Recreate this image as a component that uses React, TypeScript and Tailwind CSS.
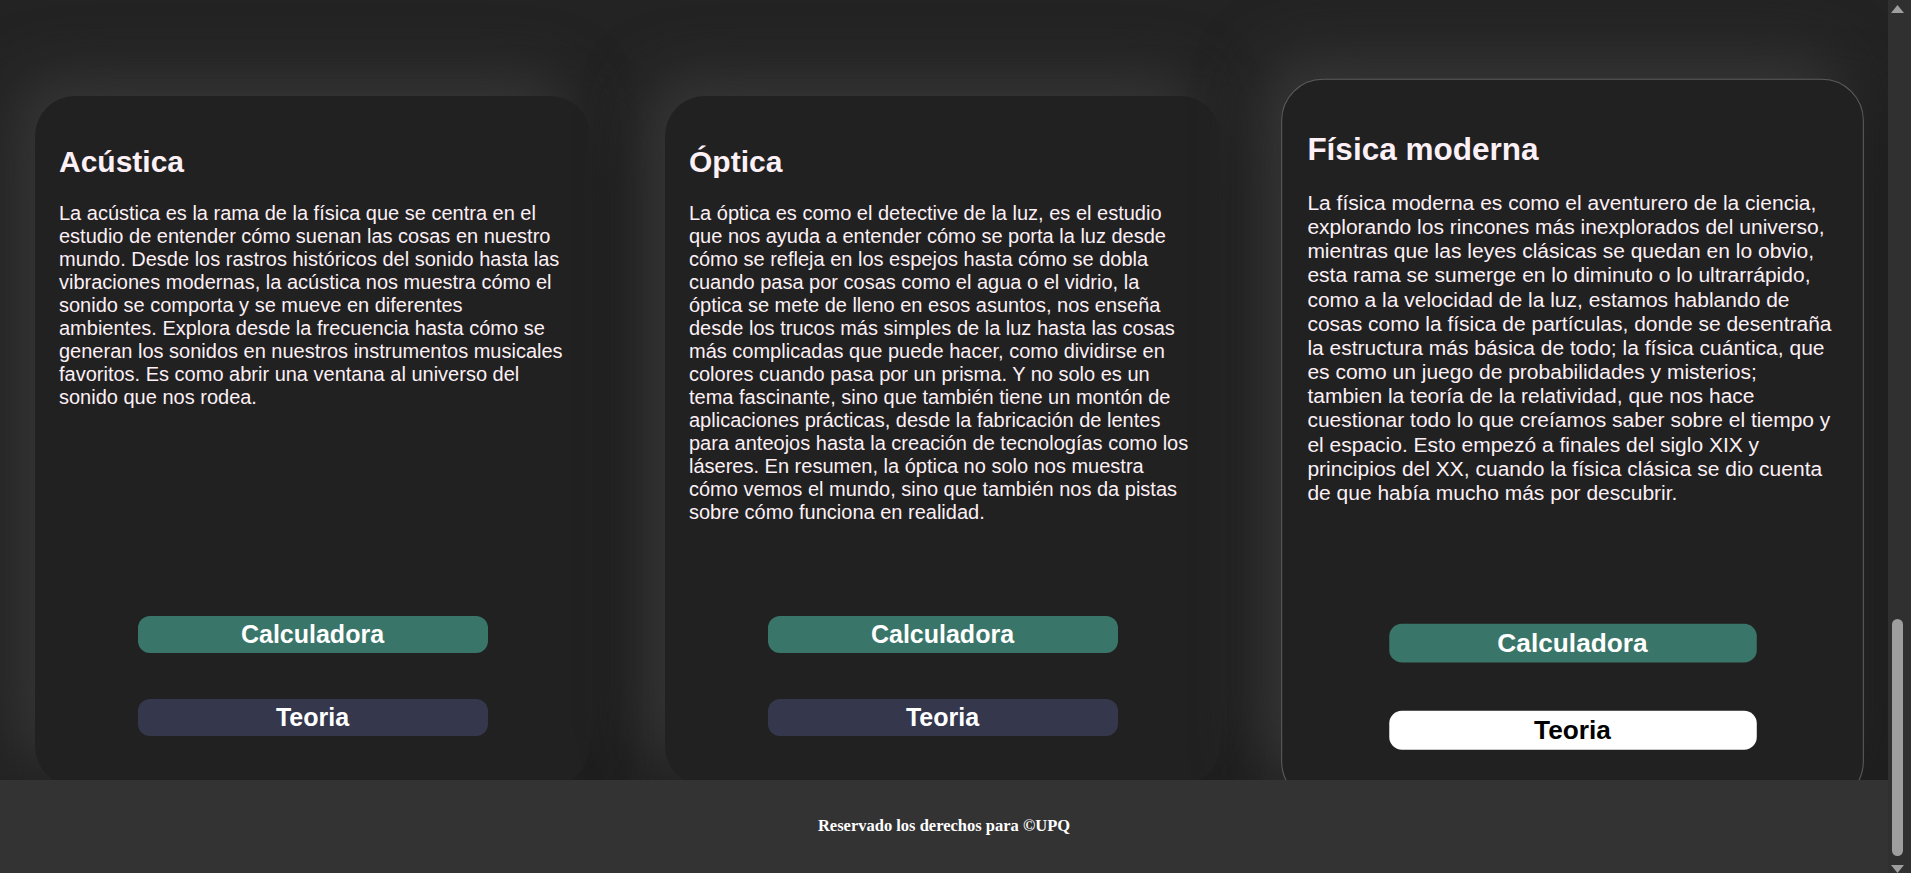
import React from 'react';

type Rama = {
  titulo: string;
  texto: string;
  activa?: boolean;
};

const ramas: Rama[] = [
  {
    titulo: 'Acústica',
    texto:
      'La acústica es la rama de la física que se centra en el estudio de entender cómo suenan las cosas en nuestro mundo. Desde los rastros históricos del sonido hasta las vibraciones modernas, la acústica nos muestra cómo el sonido se comporta y se mueve en diferentes ambientes. Explora desde la frecuencia hasta cómo se generan los sonidos en nuestros instrumentos musicales favoritos. Es como abrir una ventana al universo del sonido que nos rodea.',
  },
  {
    titulo: 'Óptica',
    texto:
      'La óptica es como el detective de la luz, es el estudio que nos ayuda a entender cómo se porta la luz desde cómo se refleja en los espejos hasta cómo se dobla cuando pasa por cosas como el agua o el vidrio, la óptica se mete de lleno en esos asuntos, nos enseña desde los trucos más simples de la luz hasta las cosas más complicadas que puede hacer, como dividirse en colores cuando pasa por un prisma. Y no solo es un tema fascinante, sino que también tiene un montón de aplicaciones prácticas, desde la fabricación de lentes para anteojos hasta la creación de tecnologías como los láseres. En resumen, la óptica no solo nos muestra cómo vemos el mundo, sino que también nos da pistas sobre cómo funciona en realidad.',
  },
  {
    titulo: 'Física moderna',
    texto:
      'La física moderna es como el aventurero de la ciencia, explorando los rincones más inexplorados del universo, mientras que las leyes clásicas se quedan en lo obvio, esta rama se sumerge en lo diminuto o lo ultrarrápido, como a la velocidad de la luz, estamos hablando de cosas como la física de partículas, donde se desentraña la estructura más básica de todo; la física cuántica, que es como un juego de probabilidades y misterios; tambien la teoría de la relatividad, que nos hace cuestionar todo lo que creíamos saber sobre el tiempo y el espacio. Esto empezó a finales del siglo XIX y principios del XX, cuando la física clásica se dio cuenta de que había mucho más por descubrir.',
    activa: true,
  },
];

function Tarjeta({ titulo, texto, activa }: Rama) {
  return (
    <div
      className={
        activa
          ? 'flex h-[690px] w-[555px] shrink-0 scale-105 flex-col rounded-[40px] border border-[#5c5c5c] bg-[#212121] pt-6 pr-[27px] pb-6 pl-6 shadow-[-20px_-20px_60px_#373737,20px_20px_60px_#1a1a1a]'
          : 'flex h-[690px] w-[555px] shrink-0 flex-col rounded-[40px] bg-[#212121] pt-6 pr-[27px] pb-6 pl-6 shadow-[-20px_-20px_60px_#373737,20px_20px_60px_#1a1a1a]'
      }
    >
      <h2 className="mt-[25px] mb-[23px] text-[30px] leading-[normal] font-bold text-[#fdf0f6]">
        {titulo}
      </h2>
      <p className="text-[20px] leading-[normal] text-[#fdf0f6]">{texto}</p>
      <div className="mt-auto flex flex-col items-center gap-[46px] pb-[26px] pl-[3px]">
        <button
          type="button"
          className="h-[37px] w-[350px] rounded-xl bg-[#3a7569] text-[25px] leading-none font-bold text-white"
        >
          Calculadora
        </button>
        <button
          type="button"
          className={
            activa
              ? 'h-[37px] w-[350px] rounded-xl bg-white text-[25px] leading-none font-bold text-black'
              : 'h-[37px] w-[350px] rounded-xl bg-[#35374d] text-[25px] leading-none font-bold text-white'
          }
        >
          Teoria
        </button>
      </div>
    </div>
  );
}

function BarraScroll() {
  return (
    <div className="flex w-[23px] shrink-0 flex-col bg-[#303030] pl-[3px]">
      <div className="flex h-[17px] items-center">
        <svg width="13" height="8" viewBox="0 0 13 8">
          <polygon points="6.5,0 13,8 0,8" fill="#9e9e9e" />
        </svg>
      </div>
      <div className="flex-1" />
      <div className="ml-[1px] h-[237px] w-[11px] rounded-full bg-[#9e9e9e]" />
      <div className="flex h-[17px] items-end">
        <svg width="13" height="8" viewBox="0 0 13 8">
          <polygon points="0,0 13,0 6.5,8" fill="#9e9e9e" />
        </svg>
      </div>
    </div>
  );
}

export default function App() {
  return (
    <div
      className="flex h-[873px] w-full overflow-hidden bg-[#232323]"
      style={{ fontFamily: '"Liberation Sans", Arial, sans-serif' }}
    >
      <div className="flex min-w-0 flex-1 flex-col">
        <main className="flex-1 overflow-hidden">
          <div className="flex gap-[75px] pt-[96px] pl-[35px]">
            {ramas.map((rama) => (
              <Tarjeta key={rama.titulo} {...rama} />
            ))}
          </div>
        </main>
        <footer className="relative z-10 flex h-[93px] items-center justify-center bg-[#333333]">
          <p className="font-['Liberation_Serif',serif] text-[16.5px] font-bold text-white">
            Reservado los derechos para ©UPQ
          </p>
        </footer>
      </div>
      <BarraScroll />
    </div>
  );
}
